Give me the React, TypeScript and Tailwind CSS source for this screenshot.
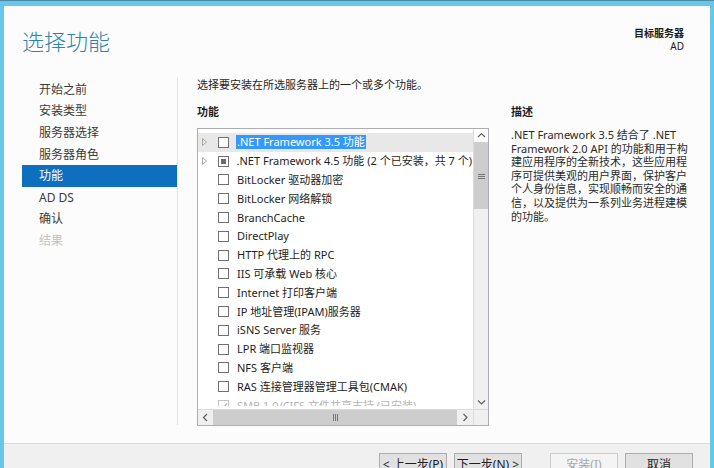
import React from "react";

const navItems = ["开始之前", "安装类型", "服务器选择", "服务器角色", "功能", "AD DS", "确认", "结果"];

const features: { label: string; expand?: boolean; state?: "none" | "partial" | "checked" }[] = [
  { label: ".NET Framework 3.5 功能", expand: true },
  { label: ".NET Framework 4.5 功能 (2 个已安装，共 7 个)", expand: true, state: "partial" },
  { label: "BitLocker 驱动器加密" },
  { label: "BitLocker 网络解锁" },
  { label: "BranchCache" },
  { label: "DirectPlay" },
  { label: "HTTP 代理上的 RPC" },
  { label: "IIS 可承载 Web 核心" },
  { label: "Internet 打印客户端" },
  { label: "IP 地址管理(IPAM)服务器" },
  { label: "iSNS Server 服务" },
  { label: "LPR 端口监视器" },
  { label: "NFS 客户端" },
  { label: "RAS 连接管理器管理工具包(CMAK)" },
  { label: "SMB 1.0/CIFS 文件共享支持 (已安装)", state: "checked" },
];

const descLines = [
  ".NET Framework 3.5 结合了 .NET",
  "Framework 2.0 API 的功能和用于构",
  "建应用程序的全新技术，这些应用程",
  "序可提供美观的用户界面，保护客户",
  "个人身份信息，实现顺畅而安全的通",
  "信，以及提供为一系列业务进程建模",
  "的功能。",
];

function Chevron({ dir }: { dir: "up" | "down" | "left" | "right" }) {
  const d = {
    up: "M1 5 L4.5 1.5 L8 5",
    down: "M1 1.5 L4.5 5 L8 1.5",
    left: "M5 1 L1.5 4.5 L5 8",
    right: "M1.5 1 L5 4.5 L1.5 8",
  }[dir];
  const horiz = dir === "up" || dir === "down";
  return (
    <svg width={horiz ? 9 : 7} height={horiz ? 7 : 9} viewBox={horiz ? "0 0 9 7" : "0 0 7 9"}>
      <path d={d} fill="none" stroke="#606060" strokeWidth="1.2" />
    </svg>
  );
}

function FeatureRow({ f, index }: { f: (typeof features)[number]; index: number }) {
  const selected = index === 0;
  const installed = f.state === "checked";
  return (
    <div className={`flex items-center h-[18.8px] shrink-0 ${selected ? "bg-[#e8e8e8]" : ""}`}>
      <div className="w-[20px] pl-[4px] flex items-center">
        {f.expand && (
          <svg width="5" height="8" viewBox="0 0 5 8">
            <path d="M0.5 0.5 L4.5 4 L0.5 7.5 Z" fill="none" stroke="#a6a6a6" strokeWidth="1" />
          </svg>
        )}
      </div>
      <div
        className={`w-[11px] h-[11px] border flex items-center justify-center shrink-0 bg-white ${
          installed ? "border-[#c4c4c4]" : "border-[#707070]"
        }`}
      >
        {f.state === "partial" && <div className="w-[5px] h-[5px] bg-[#6b6b6b]" />}
        {installed && (
          <svg width="8" height="8" viewBox="0 0 8 8">
            <path d="M1 4 L3 6 L7 1.5" fill="none" stroke="#b0b0b0" strokeWidth="1.2" />
          </svg>
        )}
      </div>
      <span
        className={`ml-[7px] px-[1px] whitespace-nowrap leading-[14px] ${
          selected ? "bg-[#3399ff] text-white" : installed ? "text-[#b4b4b4]" : "text-[#1e1e1e]"
        }`}
      >
        {f.label}
      </span>
    </div>
  );
}

export default function App() {
  return (
    <div className="w-[714px] h-[468px] overflow-hidden bg-[#66c7eb] border-t border-[#4f8aa3] pt-[5px] px-[4px] font-['Noto_Sans','Noto_Sans_CJK_SC',sans-serif]">
      <div className="h-[462px] bg-[#fcfcfc] flex flex-col">
        {/* Header */}
        <div className="h-[72px] shrink-0 flex justify-between">
          <div className="pl-[18px] pt-[20px] text-[22px] leading-[30px] text-[#2a84b0] font-light">选择功能</div>
          <div className="pr-[26px] pt-[22px] text-right text-[10px] leading-[11px] font-bold text-[#1a1a1a]">
            <div className="mb-[2px]">目标服务器</div>
            <div className="font-normal">AD</div>
          </div>
        </div>

        {/* Body */}
        <div className="h-[365px] shrink-0 flex">
          <div className="w-[173px] shrink-0 pl-[18px] pt-[1px]">
            {navItems.map((item, i) => (
              <div
                key={item}
                className={`h-[21.6px] pl-[17px] flex items-center text-[12px] ${
                  i === 4 ? "bg-[#0d6fbe] text-white" : i === 7 ? "text-[#c2c2c2]" : "text-[#3a3a3a]"
                }`}
              >
                {item}
              </div>
            ))}
          </div>
          <div className="w-px h-[347px] bg-[#e3e3e3] shrink-0" />

          <div className="flex-1 pl-[19px] text-[11px] text-[#1e1e1e]">
            <div className="leading-[13px]">选择要安装在所选服务器上的一个或多个功能。</div>
            <div className="flex mt-[14px]">
              {/* Feature list */}
              <div className="w-[292px] shrink-0">
                <div className="font-bold leading-[14px]">功能</div>
                <div className="mt-[9px] w-[292px] h-[298px] border border-[#abadb3] flex flex-col bg-white">
                  <div className="h-[280px] flex shrink-0">
                    <div className="w-[275px] h-[277px] overflow-hidden pt-[4px] flex flex-col">
                      {features.map((f, i) => (
                        <FeatureRow key={f.label} f={f} index={i} />
                      ))}
                    </div>
                    <div className="w-[15px] flex flex-col bg-[#f0f0f0] border-l border-[#dcdcdc]">
                      <div className="h-[14px] flex items-center justify-center bg-white border-b border-[#d4d4d4]">
                        <Chevron dir="up" />
                      </div>
                      <div className="h-[66px] bg-[#cdcdcd] flex flex-col items-center justify-center gap-[1px]">
                        <div className="w-[7px] h-px bg-[#777]" />
                        <div className="w-[7px] h-px bg-[#777]" />
                        <div className="w-[7px] h-px bg-[#777]" />
                      </div>
                      <div className="flex-1" />
                      <div className="h-[14px] flex items-center justify-center">
                        <Chevron dir="down" />
                      </div>
                    </div>
                  </div>
                  <div className="h-[16px] flex border-t border-[#dcdcdc] bg-[#f0f0f0]">
                    <div className="w-[15px] flex items-center justify-center">
                      <Chevron dir="left" />
                    </div>
                    <div className="w-[244px] bg-[#cdcdcd] flex items-center justify-center gap-[1px]">
                      <div className="w-px h-[7px] bg-[#777]" />
                      <div className="w-px h-[7px] bg-[#777]" />
                      <div className="w-px h-[7px] bg-[#777]" />
                    </div>
                    <div className="w-[16px] flex items-center justify-center">
                      <Chevron dir="right" />
                    </div>
                    <div className="flex-1 border-l border-[#dcdcdc]" />
                  </div>
                </div>
              </div>

              {/* Description */}
              <div className="ml-[22px] w-[190px] shrink-0">
                <div className="font-bold leading-[14px]">描述</div>
                <div className="mt-[9px] leading-[13.6px] text-[#2a2a2a]">
                  {descLines.map((l) => (
                    <div key={l} className="whitespace-nowrap">
                      {l}
                    </div>
                  ))}
                </div>
              </div>
            </div>
          </div>
        </div>

        {/* Footer */}
        <div className="flex-1 border-t border-[#dadada] bg-[#f0f0f0] flex justify-end pr-[17px] pt-[9px] text-[12px]">
          <button className="w-[68px] h-[23px] border border-[#adadad] bg-[#e1e1e1] text-[#1e1e1e] leading-[21px]">
            &lt; 上一步(P)
          </button>
          <button className="ml-[7px] w-[68px] h-[23px] border border-[#adadad] bg-[#e1e1e1] text-[#1e1e1e] leading-[21px]">
            下一步(N) &gt;
          </button>
          <button className="ml-[28px] w-[68px] h-[23px] border border-[#cccccc] bg-[#f4f4f4] text-[#a6a6a6] leading-[21px]">
            安装(I)
          </button>
          <button className="ml-[7px] w-[68px] h-[23px] border border-[#adadad] bg-[#e1e1e1] text-[#1e1e1e] leading-[21px]">
            取消
          </button>
        </div>
      </div>
    </div>
  );
}
